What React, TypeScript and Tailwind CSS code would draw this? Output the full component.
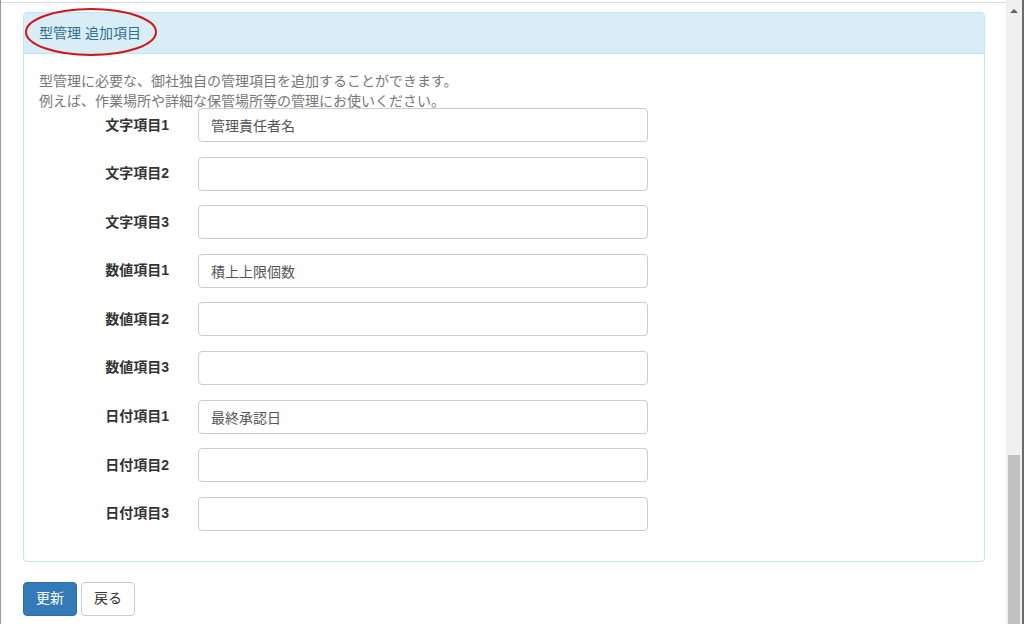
// 型管理 追加項目 の設定画面

const FONT = '"Liberation Sans", "Noto Sans CJK JP", sans-serif'

type Field = { label: string; value: string }

const fields: Field[] = [
  { label: '文字項目1', value: '管理責任者名' },
  { label: '文字項目2', value: '' },
  { label: '文字項目3', value: '' },
  { label: '数値項目1', value: '積上上限個数' },
  { label: '数値項目2', value: '' },
  { label: '数値項目3', value: '' },
  { label: '日付項目1', value: '最終承認日' },
  { label: '日付項目2', value: '' },
  { label: '日付項目3', value: '' },
]

export default function App() {
  return (
    <div
      className="relative flex h-[624px] w-[1024px] overflow-hidden border-l border-[#9a9a9a] bg-white text-[14px] text-[#333]"
      style={{ fontFamily: FONT }}
    >
      <main className="mt-[2px] flex-1 border-t border-[#dcdcdc] pr-[21px] pl-[22px]">
        <section className="mt-[9px] rounded-[4px] border border-[#bce8f1]">
          <div className="flex h-[41px] items-center rounded-t-[4px] border-b border-[#bce8f1] bg-[#d9edf7] px-[15px] text-[#31708f]">
            型管理 追加項目
          </div>
          <div className="px-[15px] pt-[18px] pb-[30px]">
            <p className="leading-[19.5px] text-[#777]">
              型管理に必要な、御社独自の管理項目を追加することができます。
              <br />
              例えば、作業場所や詳細な保管場所等の管理にお使いください。
            </p>
            <div className="mt-[-3px] flex flex-col gap-[14.6px]">
              {fields.map((field) => (
                <div key={field.label} className="flex h-[34px] items-center">
                  <label className="w-[130px] text-right font-bold">{field.label}</label>
                  <input
                    defaultValue={field.value}
                    className="ml-[29px] h-[34px] w-[450px] rounded-[4px] border border-[#ccc] px-[12px] text-[#555] outline-none"
                  />
                </div>
              ))}
            </div>
          </div>
        </section>
        <div className="mt-[20px] flex gap-[4px]">
          <button
            type="button"
            className="h-[34px] rounded-[4px] border border-[#2e6da4] bg-[#337ab7] px-[12px] text-white"
          >
            更新
          </button>
          <button
            type="button"
            className="h-[34px] rounded-[4px] border border-[#ccc] bg-white px-[12px] text-[#333]"
          >
            戻る
          </button>
        </div>
      </main>

      <div className="flex w-[18px] border-r-2 border-[#6b6b6b] bg-[#f0f0f0]">
        <div className="flex flex-1 flex-col items-center">
          <div className="mt-[9px] h-0 w-0 border-x-[4px] border-b-[4px] border-x-transparent border-b-[#606060]" />
          <div className="mt-[442px] h-[170px] w-[12px] bg-[#c1c1c1]" />
        </div>
      </div>

      <svg className="pointer-events-none absolute top-0 left-0" width="170" height="64">
        <ellipse cx="90" cy="32" rx="65" ry="23" fill="none" stroke="#d0151b" strokeWidth="2" />
      </svg>
    </div>
  )
}
